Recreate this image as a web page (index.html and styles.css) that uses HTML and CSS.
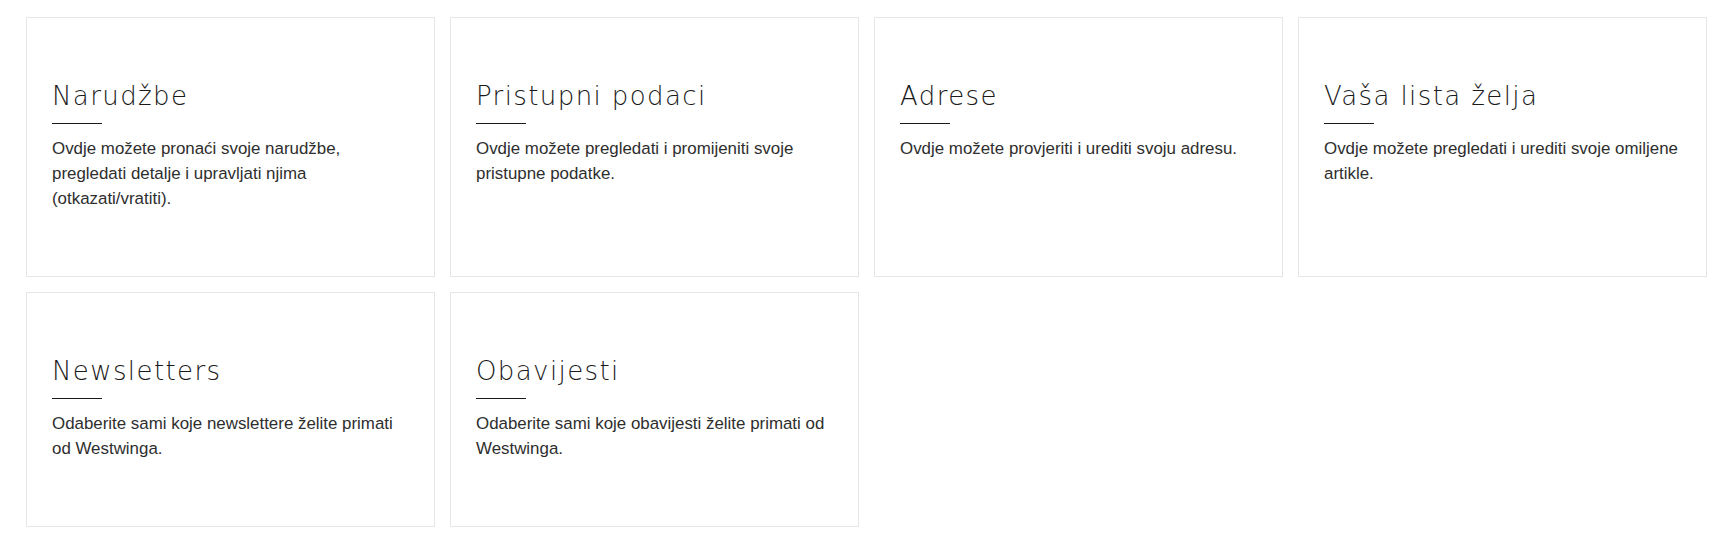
FILE: index.html
```html
<!DOCTYPE html>
<html lang="hr">
<head>
<meta charset="utf-8">
<title>Moj račun</title>
<link rel="stylesheet" href="styles.css">
</head>
<body>
<main class="grid">
  <a class="card" href="#">
    <h2 class="card-title">Narudžbe</h2>
    <p class="card-text">Ovdje možete pronaći svoje narudžbe, pregledati detalje i upravljati njima (otkazati/vratiti).</p>
  </a>
  <a class="card" href="#">
    <h2 class="card-title">Pristupni podaci</h2>
    <p class="card-text">Ovdje možete pregledati i promijeniti svoje pristupne podatke.</p>
  </a>
  <a class="card" href="#">
    <h2 class="card-title">Adrese</h2>
    <p class="card-text">Ovdje možete provjeriti i urediti svoju adresu.</p>
  </a>
  <a class="card" href="#">
    <h2 class="card-title">Vaša lista želja</h2>
    <p class="card-text">Ovdje možete pregledati i urediti svoje omiljene artikle.</p>
  </a>
  <a class="card" href="#">
    <h2 class="card-title">Newsletters</h2>
    <p class="card-text">Odaberite sami koje newslettere želite primati od Westwinga.</p>
  </a>
  <a class="card" href="#">
    <h2 class="card-title">Obavijesti</h2>
    <p class="card-text">Odaberite sami koje obavijesti želite primati od Westwinga.</p>
  </a>
</main>
</body>
</html>
```

FILE: styles.css
```css
html, body {
  margin: 0;
  background: #ffffff;
}

.grid {
  display: grid;
  grid-template-columns: repeat(4, 1fr);
  gap: 15px;
  padding: 17px 17px 8px 26px;
}

.card {
  display: block;
  border: 1px solid #e6e6e6;
  padding: 62px 25px 65px 25px;
  text-decoration: none;
  color: #222222;
}

.card-title {
  margin: 0;
  font-family: "DejaVu Sans", sans-serif;
  font-weight: 200;
  font-size: 26px;
  line-height: 32px;
  letter-spacing: 1.4px;
  color: #1a1a1a;
}

.card-title::after {
  content: "";
  display: block;
  width: 50px;
  height: 1px;
  background: #1a1a1a;
  margin-top: 11px;
}

.card-text {
  margin: 12px 0 0 0;
  font-family: "Liberation Sans", Arial, sans-serif;
  font-size: 16.9px;
  line-height: 25px;
  color: #2e2e2e;
}
```
